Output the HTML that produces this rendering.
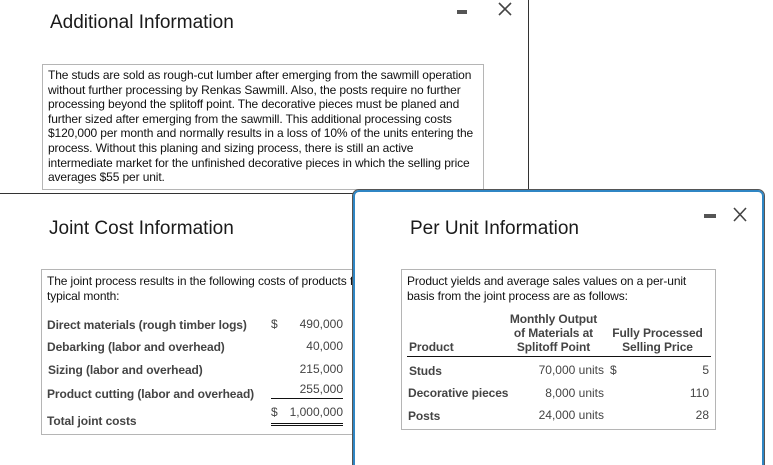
<!DOCTYPE html>
<html><head><style>
*{margin:0;padding:0;box-sizing:border-box}
html,body{width:773px;height:465px;overflow:hidden;background:#fff;font-family:"Liberation Sans",Arial,sans-serif;color:#222}
#w{width:773px;height:465px;position:relative;overflow:hidden;background:#fff}
.abs{position:absolute}
.title{font-size:19px;color:#1a1a1a;white-space:nowrap}
.box{position:absolute;border:1px solid #b5b5b5;background:#fff;font-size:12px;line-height:14.6px;color:#111;padding:3px 5px}
.row{position:absolute;font-size:12px;font-weight:bold;color:#444;white-space:nowrap;letter-spacing:-0.1px}
.num{position:absolute;font-size:12px;color:#444;white-space:nowrap;text-align:right}
.minus{position:absolute;height:4px;background:#555}
.tx{white-space:nowrap;letter-spacing:-0.12px}
</style></head><body><div id="w">
<div class="abs" style="left:0;top:0;width:529px;height:194px;border-right:1px solid #333;border-bottom:1px solid #333"></div>
<div class="abs title" style="left:50px;top:12px">Additional Information</div>
<div class="minus" style="left:457px;top:10px;width:10px"></div>
<svg class="abs" style="left:497px;top:2px" width="16" height="14"><path d="M2 1 L14 13 M14 1 L2 13" stroke="#444" stroke-width="1.6"/></svg>
<div class="box tx" style="left:42px;top:64px;width:442px;height:126px;padding:3px 5px">The studs are sold as rough-cut lumber after emerging from the sawmill operation<br>without further processing by Renkas Sawmill. Also, the posts require no further<br>processing beyond the splitoff point. The decorative pieces must be planed and<br>further sized after emerging from the sawmill. This additional processing costs<br>$120,000 per month and normally results in a loss of 10% of the units entering the<br>process. Without this planing and sizing process, there is still an active<br>intermediate market for the unfinished decorative pieces in which the selling price<br>averages $55 per unit.</div>

<div class="abs title" style="left:49px;top:218px">Joint Cost Information</div>
<div class="box" style="left:41px;top:269px;width:330px;height:166px"></div>
<div class="abs tx" style="left:47px;top:274px;font-size:12px;line-height:14.6px;color:#111">The joint process results in the following costs of products f<br>typical month:</div>
<div class="row" style="left:47px;top:318px">Direct materials (rough timber logs)</div>
<div class="row" style="left:47px;top:340px">Debarking (labor and overhead)</div>
<div class="row" style="left:48px;top:363px">Sizing (labor and overhead)</div>
<div class="row" style="left:47px;top:387px">Product cutting (labor and overhead)</div>
<div class="row" style="left:47px;top:414px">Total joint costs</div>
<div class="num" style="left:271px;top:317px">$</div>
<div class="num" style="left:290px;top:317px;width:53px">490,000</div>
<div class="num" style="left:290px;top:339px;width:53px">40,000</div>
<div class="num" style="left:290px;top:362px;width:53px">215,000</div>
<div class="num" style="left:290px;top:382px;width:53px">255,000</div>
<div class="abs" style="left:271px;top:398px;width:72px;border-top:1px solid #111"></div>
<div class="num" style="left:271px;top:405px">$</div>
<div class="num" style="left:285px;top:405px;width:58px">1,000,000</div>
<div class="abs" style="left:271px;top:423px;width:72px;height:3px;border-top:1px solid #111;border-bottom:1px solid #111"></div>

<div class="abs" style="left:353px;top:190px;width:411px;height:275px;border:2px solid #2f86c4;border-bottom:none;outline:1px solid #555;border-radius:6px 6px 0 0;background:#fff;clip-path:inset(-2px -2px 0 -2px)"></div>
<div class="abs title" style="left:410px;top:218px">Per Unit Information</div>
<div class="minus" style="left:704px;top:214px;width:12px"></div>
<svg class="abs" style="left:732px;top:207px" width="16" height="15"><path d="M2 1 L14 14 M14 1 L2 14" stroke="#444" stroke-width="1.6"/></svg>
<div class="box" style="left:401px;top:269px;width:315px;height:161px"></div>
<div class="abs tx" style="left:407px;top:274px;font-size:12px;line-height:14.6px;color:#111">Product yields and average sales values on a per-unit<br>basis from the joint process are as follows:</div>
<div class="row" style="left:496px;top:312px;width:115px;text-align:center;line-height:14px">Monthly Output<br>of Materials at<br>Splitoff Point</div>
<div class="row" style="left:610px;top:326px;width:95px;text-align:center;line-height:14px">Fully Processed<br>Selling Price</div>
<div class="row" style="left:409px;top:340px">Product</div>
<div class="abs" style="left:407px;top:356px;width:304px;border-top:1px solid #111"></div>
<div class="row" style="left:409px;top:364px">Studs</div>
<div class="row" style="left:408px;top:386px">Decorative pieces</div>
<div class="row" style="left:408px;top:409px">Posts</div>
<div class="num" style="left:500px;top:363px;width:104px">70,000 units</div>
<div class="num" style="left:610px;top:363px">$</div>
<div class="num" style="left:500px;top:386px;width:104px">8,000 units</div>
<div class="num" style="left:500px;top:408px;width:104px">24,000 units</div>
<div class="num" style="left:650px;top:363px;width:59px">5</div>
<div class="num" style="left:650px;top:386px;width:59px">110</div>
<div class="num" style="left:650px;top:408px;width:59px">28</div>
</div></body></html>
